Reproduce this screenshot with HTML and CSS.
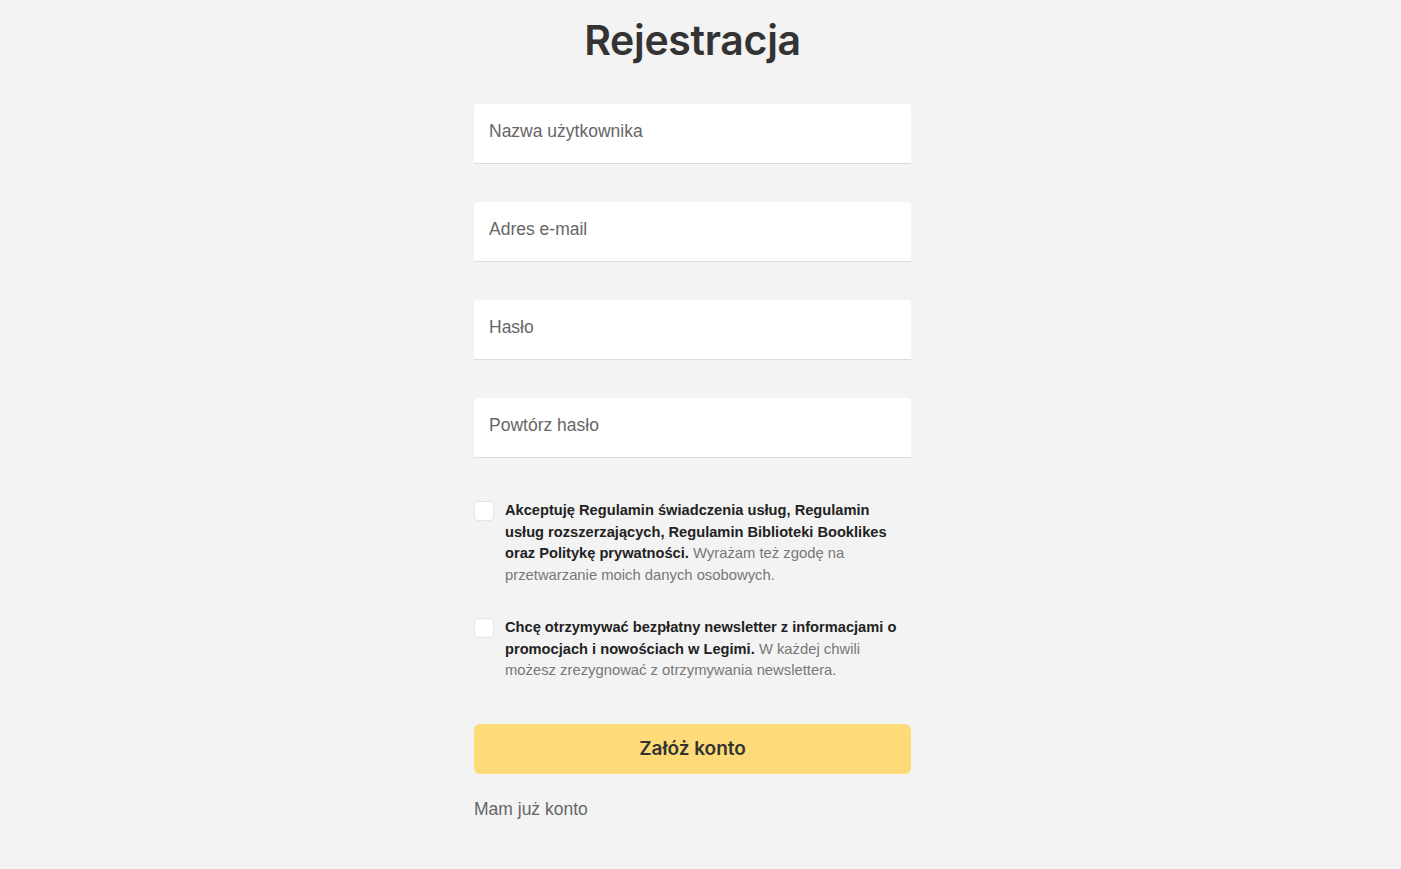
FILE: index.html
```html
<!DOCTYPE html>
<html lang="pl">
<head>
<meta charset="utf-8">
<title>Rejestracja</title>
<link rel="stylesheet" href="styles.css">
</head>
<body>
<main class="page">
  <h1 class="title">Rejestracja</h1>
  <form class="form">
    <div class="field"><input class="input" type="text" placeholder="Nazwa użytkownika"></div>
    <div class="field"><input class="input" type="email" placeholder="Adres e-mail"></div>
    <div class="field"><input class="input" type="password" placeholder="Hasło"></div>
    <div class="field"><input class="input" type="password" placeholder="Powtórz hasło"></div>
    <label class="check check-first">
      <span class="box"></span>
      <span class="check-text"><b>Akceptuję Regulamin świadczenia usług, Regulamin usług rozszerzających, Regulamin Biblioteki Booklikes oraz Politykę prywatności.</b> Wyrażam też zgodę na przetwarzanie moich danych osobowych.</span>
    </label>
    <label class="check">
      <span class="box"></span>
      <span class="check-text"><b>Chcę otrzymywać bezpłatny newsletter z informacjami o promocjach i nowościach w Legimi.</b> W każdej chwili możesz zrezygnować z otrzymywania newslettera.</span>
    </label>
    <button class="submit" type="button">Załóż konto</button>
    <a class="login" href="#">Mam już konto</a>
  </form>
</main>
</body>
</html>
```

FILE: styles.css
```css
* { box-sizing: border-box; }
html, body { margin: 0; padding: 0; }
body {
  background: #f3f3f3;
  font-family: "Liberation Sans", Arial, sans-serif;
  padding-right: 16px;
  min-height: 869px;
}
.page {
  width: 437px;
  margin: 0 auto;
  display: flex;
  flex-direction: column;
}
.title {
  margin: 14px 0 0;
  text-align: center;
  font-family: Inter, "Open Sans", sans-serif;
  font-weight: 600;
  font-size: 41px;
  line-height: 52px;
  color: #333;
  letter-spacing: -0.3px;
}
.form {
  display: flex;
  flex-direction: column;
  margin-top: 38px;
}
.field { margin-bottom: 38px; }
.input {
  display: block;
  width: 100%;
  height: 60px;
  border: 0;
  border-bottom: 1px solid #dcdcdc;
  border-radius: 4px 4px 0 0;
  background: #fff;
  padding: 0 15px 5px;
  font-family: "Liberation Sans", Arial, sans-serif;
  font-size: 17.5px;
  color: #333;
  outline: none;
}
.input::placeholder { color: #666; opacity: 1; }
.check {
  display: flex;
  gap: 11px;
  align-items: flex-start;
  font-size: 14.8px;
  line-height: 21.7px;
  color: #777;
  margin-bottom: 30px;
}
.check-first { margin-top: 4px; }
.box {
  flex: 0 0 20px;
  width: 20px;
  height: 20px;
  background: #fff;
  border: 1px solid #e4e4e4;
  border-radius: 4px;
  margin-top: 1px;
}
.check-text b { color: #222; font-weight: 700; font-size: 14.65px; }
.submit {
  margin-top: 12px;
  height: 50px;
  border: 0;
  border-radius: 6px;
  background: #fedb78;
  font-family: Inter, "Open Sans", sans-serif;
  font-weight: 600;
  font-size: 19px;
  color: #333;
}
.login {
  margin-top: 25px;
  font-size: 17.5px;
  color: #666;
  text-decoration: none;
}
```
